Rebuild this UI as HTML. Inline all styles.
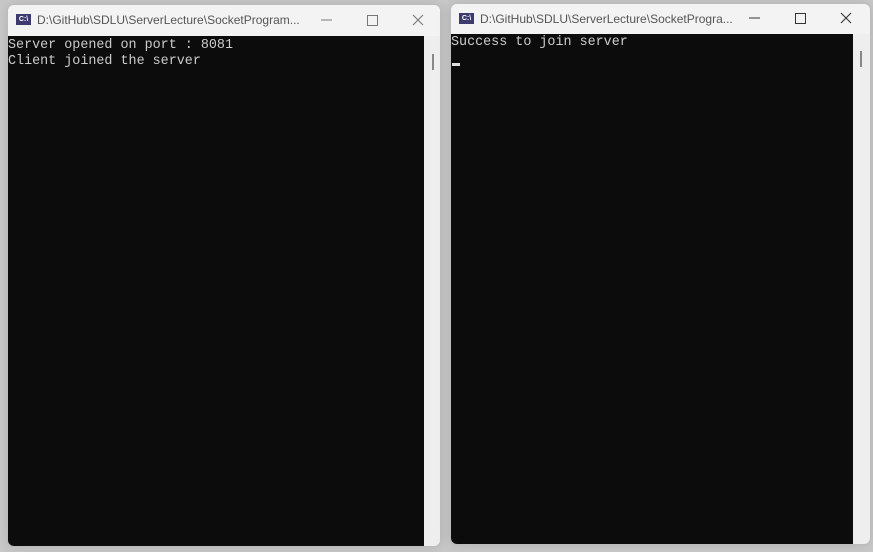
<!DOCTYPE html><html><head><style>
body{margin:0;width:873px;height:552px;background:#c9c9c9;position:relative;overflow:hidden;font-family:"Liberation Sans",sans-serif}
.win{position:absolute;background:#eeeeee;border:1px solid #bcbcbc;border-radius:7px;overflow:hidden;box-shadow:0 0 12px rgba(0,0,0,.12)}
.tb{position:absolute;left:0;right:0;top:0;height:31px;background:#f3f3f3}
.icon{position:absolute;left:8px;top:9px;width:15px;height:11px;background:#3c3a6e;color:#fff;font-size:7px;line-height:11px;text-align:center;font-weight:bold}
.title{position:absolute;left:29px;top:8px;font-size:12px;color:#555;white-space:nowrap}
.con{position:absolute;background:#0c0c0c;color:#cccccc;font-family:"Liberation Mono",monospace;font-size:13.4px;line-height:16px;white-space:pre}
.sb{position:absolute;width:2px;height:16px;background:#888;}
svg{position:absolute}
</style></head><body>
<div class="win" style="left:7px;top:4px;width:432px;height:541px">
<div class="tb"><div class="icon">C:\</div><div class="title">D:\GitHub\SDLU\ServerLecture\SocketProgram...</div>
<svg style="left:313px;top:14px" width="12" height="2"><line x1="0" y1="1" x2="11" y2="1" stroke="#777" stroke-width="1"/></svg>
<div style="position:absolute;left:359px;top:10px;width:9px;height:9px;border:1px solid #777"></div>
<svg style="left:404px;top:9px" width="12" height="12"><path d="M1 1L11 11M11 1L1 11" stroke="#777" stroke-width="1.1"/></svg></div>
<div class="con" style="left:0;top:31px;width:416px;bottom:0;padding-top:2px">Server opened on port : 8081
Client joined the server</div>
<div class="sb" style="left:424px;top:49px"></div>
</div>
<div class="win" style="left:450px;top:3px;width:419px;height:540px">
<div class="tb" style="height:30px"><div class="icon">C:\</div><div class="title">D:\GitHub\SDLU\ServerLecture\SocketProgra...</div>
<svg style="left:298px;top:13px" width="12" height="2"><line x1="0" y1="1" x2="11" y2="1" stroke="#333" stroke-width="1"/></svg>
<div style="position:absolute;left:344px;top:9px;width:9px;height:9px;border:1px solid #333"></div>
<svg style="left:389px;top:8px" width="12" height="12"><path d="M1 1L11 11M11 1L1 11" stroke="#333" stroke-width="1.1"/></svg></div>
<div class="con" style="left:0;top:30px;width:402px;bottom:0;padding-top:1px">Success to join server</div>
<div style="position:absolute;left:1px;top:59px;width:8px;height:3px;background:#ddd"></div>
<div class="sb" style="left:409px;top:47px"></div>
</div>
</body></html>
